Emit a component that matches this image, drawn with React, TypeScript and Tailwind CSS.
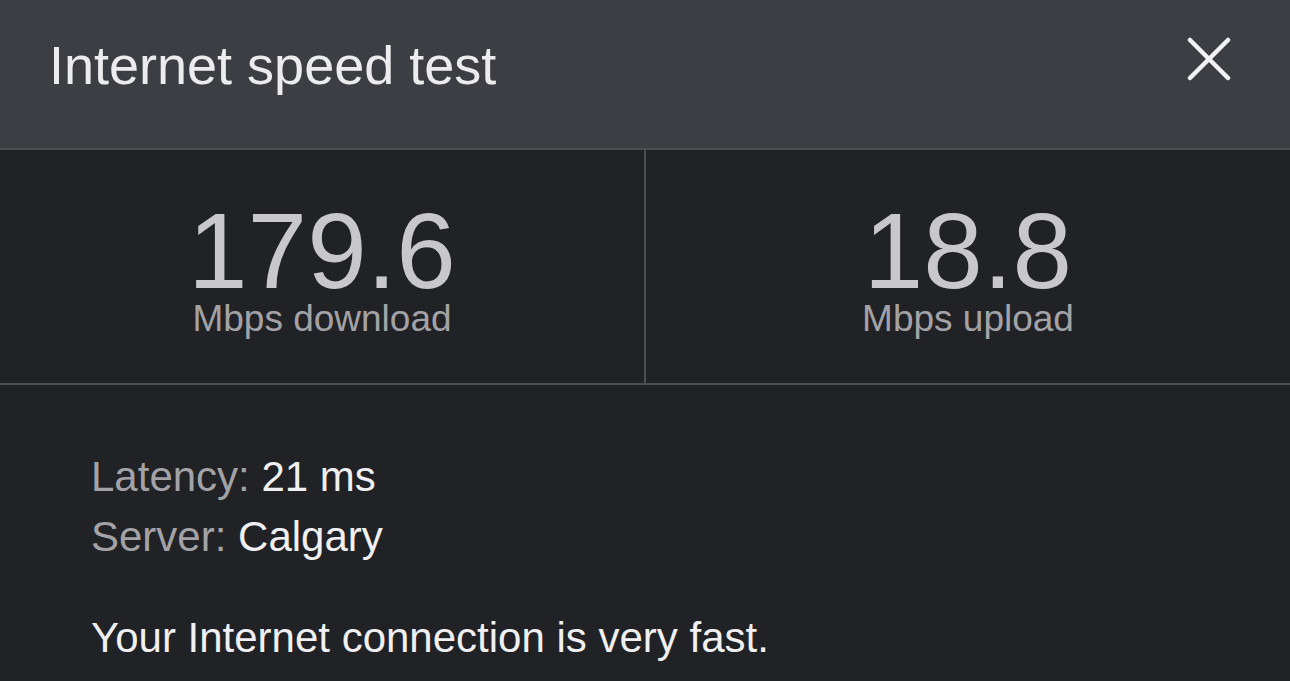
import React from 'react';

const font = { fontFamily: '"Liberation Sans", Arial, sans-serif' };

function Stat({ value, label }: { value: string; label: string }) {
  return (
    <div className="flex flex-1 flex-col items-center pt-[53px]">
      <div className="text-[107px] leading-[96px] text-[#c8c8cc]">{value}</div>
      <div className="text-[37px] leading-[40px] text-[#a3a3a7]">{label}</div>
    </div>
  );
}

export default function App() {
  return (
    <div className="w-[1290px] h-[681px] overflow-hidden bg-[#212226]" style={font}>
      <div className="flex h-[148px] items-start justify-between bg-[#3d3e43] pl-[49px] pr-[59px] pt-[37px]">
        <h1 className="mt-[1px] text-[54px] leading-none text-[#ececee]">Internet speed test</h1>
        <button className="text-[#f2f2f4]">
          <svg width="44" height="44" viewBox="0 0 44 44" fill="none" stroke="currentColor" strokeWidth="4.5" strokeLinecap="round">
            <path d="M3 3L41 41M41 3L3 41" />
          </svg>
        </button>
      </div>

      <div className="flex h-[237px] border-y-2 border-[#4c4d51]">
        <Stat value="179.6" label="Mbps download" />
        <div className="w-[2px] bg-[#4c4d51]" />
        <Stat value="18.8" label="Mbps upload" />
      </div>

      <div className="pl-[91px] pt-[62px] text-[42px] leading-[60px]">
        <div>
          <span className="text-[#a3a3a7]">Latency: </span>
          <span className="text-[#f0f0f2]">21 ms</span>
        </div>
        <div>
          <span className="text-[#a3a3a7]">Server: </span>
          <span className="text-[#f0f0f2]">Calgary</span>
        </div>
        <p className="mt-[41px] text-[#f0f0f2]">Your Internet connection is very fast.</p>
      </div>
    </div>
  );
}
